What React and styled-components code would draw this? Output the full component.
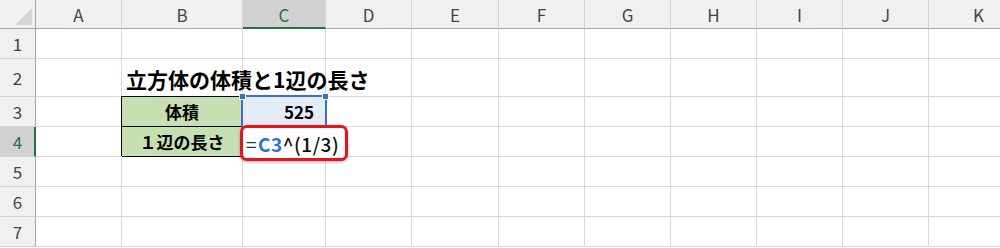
import React from "react";
import styled, { createGlobalStyle } from "styled-components";

const Global = createGlobalStyle`
  html, body { margin: 0; padding: 0; background: #fff; }
  body { font-family: "Noto Sans CJK JP", "Noto Sans", sans-serif; overflow: hidden; }
`;

const COLS = ["A", "B", "C", "D", "E", "F", "G", "H", "I", "J", "K"];
const WIDTHS = [36, 86, 121, 83, 86, 87, 86, 86, 86, 86, 86, 100];
const HEIGHTS = [29, 30, 38, 30, 30, 30, 30, 30];

const Sheet = styled.div`
  display: grid;
  grid-template-columns: ${WIDTHS.map((w) => `${w}px`).join(" ")};
  grid-template-rows: ${HEIGHTS.map((h) => `${h}px`).join(" ")};
  width: 1000px;
  height: 248px;
  overflow: hidden;
`;

const Corner = styled.div`
  background: #f0f0f0;
  border-right: 1px solid #a6a6a6;
  border-bottom: 1px solid #a6a6a6;
  box-sizing: border-box;
  display: flex;
  align-items: flex-end;
  justify-content: flex-end;
  padding: 0 3px 3px 0;
`;

const ColHead = styled.div`
  box-sizing: border-box;
  background: ${(p) => (p.$active ? "#d2d2d2" : "#f0f0f0")};
  color: ${(p) => (p.$active ? "#217346" : "#444")};
  border-right: 1px solid #d4d4d4;
  border-bottom: ${(p) => (p.$active ? "2px solid #217346" : "1px solid #a6a6a6")};
  display: flex;
  align-items: center;
  justify-content: center;
  font-size: 17px;
  font-weight: 400;
  padding-top: ${(p) => (p.$active ? "1px" : "0")};
`;

const RowHead = styled.div`
  box-sizing: border-box;
  background: ${(p) => (p.$active ? "#d2d2d2" : "#f0f0f0")};
  color: ${(p) => (p.$active ? "#217346" : "#444")};
  border-bottom: 1px solid #d4d4d4;
  border-right: ${(p) => (p.$active ? "2px solid #217346" : "1px solid #a6a6a6")};
  display: flex;
  align-items: center;
  justify-content: center;
  font-size: 17px;
  padding-left: ${(p) => (p.$active ? "1px" : "0")};
`;

const Cell = styled.div`
  box-sizing: border-box;
  position: relative;
  border-right: 1px solid #d9d9d9;
  border-bottom: 1px solid #d9d9d9;
  background: #fff;
  display: flex;
  align-items: center;
  white-space: nowrap;
  color: #000;
`;

const TableCell = styled(Cell)`
  background: #c6e0b4;
  border-right: 1px solid #000;
  border-bottom: 1px solid #000;
  box-shadow: -1px -1px 0 #000;
  justify-content: center;
  font-size: 17px;
  font-weight: 700;
`;

const Title = styled.span`
  font-size: 21px;
  font-weight: 700;
  padding-left: 4px;
  margin-top: 2px;
  position: relative;
  z-index: 1;
`;

const ValueCell = styled(Cell)`
  background: #e3ebf7;
  justify-content: flex-end;
  padding-right: 11px;
  font-size: 17px;
  font-weight: 700;
`;

const Selection = styled.div`
  position: absolute;
  left: -2px;
  top: -2px;
  right: -2px;
  bottom: -2px;
  border: 2px solid #3a70c8;
  pointer-events: none;
  z-index: 2;
`;

const Handle = styled.div`
  position: absolute;
  width: 5px;
  height: 5px;
  background: #3a70c8;
  border: 1px solid #fff;
  ${(p) => (p.$left ? "left: -4px;" : "right: -4px;")}
  top: -4px;
`;

const Editor = styled.div`
  position: absolute;
  left: -3px;
  top: -2px;
  width: 108px;
  height: 36px;
  box-sizing: border-box;
  border: 3px solid #e8141b;
  border-radius: 7px;
  background: #fff;
  box-shadow: 0 1px 3px rgba(0, 0, 0, 0.35);
  display: flex;
  align-items: center;
  padding-left: 3px;
  font-size: 19px;
  font-weight: 500;
  letter-spacing: 0.5px;
  color: #111;
  z-index: 3;
`;

const Ref = styled.span`
  color: #2f6fd6;
  font-weight: 700;
`;

const Eq = styled.span`
  font-weight: 400;
  color: #333;
  margin-right: 1px;
`;

export default function App() {
  const rows = [1, 2, 3, 4, 5, 6, 7];
  const renderCell = (r, c) => {
    const key = `${r}-${c}`;
    if (r === 2 && c === "B") {
      return (
        <Cell key={key}>
          <Title>立方体の体積と1辺の長さ</Title>
        </Cell>
      );
    }
    if (r === 3 && c === "B") return <TableCell key={key}>体積</TableCell>;
    if (r === 4 && c === "B") return <TableCell key={key}>１辺の長さ</TableCell>;
    if (r === 3 && c === "C") {
      return (
        <ValueCell key={key}>
          525
          <Selection>
            <Handle $left />
            <Handle />
          </Selection>
        </ValueCell>
      );
    }
    if (r === 4 && c === "C") {
      return (
        <Cell key={key}>
          <Editor>
            <Eq>=</Eq>
            <Ref>C3</Ref>^(1/3)
          </Editor>
        </Cell>
      );
    }
    return <Cell key={key} />;
  };

  return (
    <>
      <Global />
      <Sheet>
        <Corner>
          <svg width="17" height="17" viewBox="0 0 17 17">
            <polygon points="17,0 17,17 0,17" fill="#d6d6d6" />
          </svg>
        </Corner>
        {COLS.map((c) => (
          <ColHead key={c} $active={c === "C"}>
            {c}
          </ColHead>
        ))}
        {rows.map((r) => (
          <React.Fragment key={r}>
            <RowHead $active={r === 4}>{r}</RowHead>
            {COLS.map((c) => renderCell(r, c))}
          </React.Fragment>
        ))}
      </Sheet>
    </>
  );
}
